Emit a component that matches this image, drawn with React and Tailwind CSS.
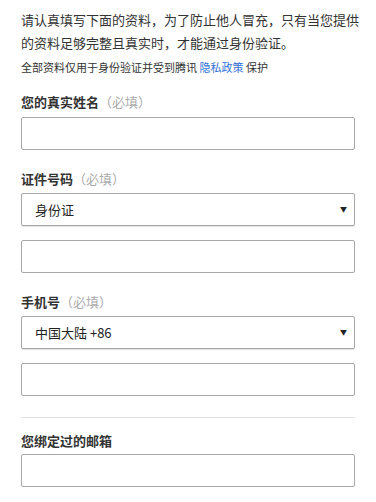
import React from 'react';

const font = { fontFamily: '"Noto Sans CJK SC", "Noto Sans", sans-serif' };

const Label = ({ text, required }) => (
  <div className="text-[13px] leading-[20px] text-[#333]">
    <span className="font-bold">{text}</span>
    {required && <span className="text-[#aaa] font-normal">（必填）</span>}
  </div>
);

const Input = ({ className = '' }) => (
  <input
    type="text"
    className={`block w-full h-[33px] border border-[#a8a8a8] rounded-[2px] bg-white px-3 text-[13px] outline-none ${className}`}
  />
);

const Select = ({ value, className = '' }) => (
  <div
    className={`flex items-center justify-between w-full h-[33px] border border-[#a8a8a8] rounded-[2px] bg-white pl-[13px] pr-[7px] shadow-[0_1px_1px_rgba(0,0,0,0.12)] ${className}`}
  >
    <span className="text-[13px] text-[#222]">{value}</span>
    <span className="text-[7px] text-[#222]">▼</span>
  </div>
);

export default function App() {
  return (
    <div className="bg-white min-h-[502px] px-[21px] pt-[8px]" style={font}>
      <p className="text-[13px] leading-[23px] text-[#333] whitespace-nowrap">
        请认真填写下面的资料，为了防止他人冒充，只有当您提供
        <br />
        的资料足够完整且真实时，才能通过身份验证。
      </p>
      <p className="mt-[4px] text-[11px] leading-[18px] text-[#333]">
        全部资料仅用于身份验证并受到腾讯 <a className="text-[#2f6fd6]">隐私政策</a> 保护
      </p>

      <div className="mt-[16px]">
        <Label text="您的真实姓名" required />
        <Input className="mt-[5px]" />
      </div>

      <div className="mt-[19px]">
        <Label text="证件号码" required />
        <Select value="身份证" className="mt-[4px]" />
        <Input className="mt-[14px]" />
      </div>

      <div className="mt-[19px]">
        <Label text="手机号" required />
        <Select value="中国大陆 +86" className="mt-[4px]" />
        <Input className="mt-[14px]" />
      </div>

      <div className="mt-[21px] h-px bg-[#e2e2e2]" />

      <div className="mt-[13px]">
        <Label text="您绑定过的邮箱" />
        <Input className="mt-[3px]" />
      </div>
    </div>
  );
}
